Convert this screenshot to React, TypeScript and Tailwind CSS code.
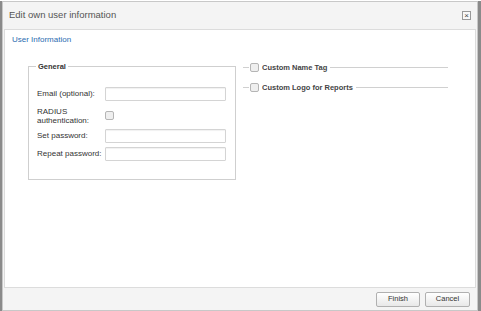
export default function App() {
  const inputCls = "w-[121px] h-[14px] border border-[#d4d4d4] bg-white rounded-[1px] shadow-[inset_0_1px_1px_rgba(0,0,0,0.06)]";
  const boxCls = "w-[9px] h-[9px] border border-[#b5b5b5] bg-[#efefef] rounded-[2px]";

  return (
    <div className="w-[481px] h-[311px] bg-[#8a8a8a] font-['Liberation_Sans',Arial,sans-serif] text-[#333]">
      <div className="ml-[2px] mr-[3px] mt-[1px] h-[310px] bg-[#f4f4f4] border border-[#c8c8c8] flex flex-col">
        {/* title bar */}
        <div className="h-[27px] flex items-center justify-between pl-[6px] pr-[6px]">
          <span className="text-[9.5px] text-[#555]">Edit own user information</span>
          <span className="w-[9px] h-[9px] border border-[#999] bg-[#f8f8f8] flex items-center justify-center text-[8px] leading-none text-[#444]">
            ×
          </span>
        </div>

        {/* content */}
        <div className="mx-[1px] flex-1 bg-white border border-[#dcdcdc] pt-[5px] px-[7px]">
          <div className="text-[8px] text-[#2b6cb0] leading-[10px]">User Information</div>

          <div className="flex mt-[17px] ml-[16px] gap-[7px]">
            {/* General fieldset */}
            <fieldset className="w-[208px] h-[118px] border border-[#cfcfcf] px-[8px] pb-0 m-0">
              <legend className="text-[7.5px] leading-[9px] font-bold text-[#333] px-[2px] ml-[-1px]">General</legend>
              <div className="mt-[16px] flex flex-col gap-[4px] text-[8px] text-[#333] whitespace-nowrap">
                <div className="flex items-center">
                  <span className="w-[68px]">Email (optional):</span>
                  <div className={inputCls} />
                </div>
                <div className="flex items-center mt-[2px]">
                  <span className="w-[68px] leading-[9px]">RADIUS<br />authentication:</span>
                  <div className={boxCls + " mb-[2px]"} />
                </div>
                <div className="flex items-center">
                  <span className="w-[68px]">Set password:</span>
                  <div className={inputCls} />
                </div>
                <div className="flex items-center">
                  <span className="w-[68px]">Repeat password:</span>
                  <div className={inputCls} />
                </div>
              </div>
            </fieldset>

            {/* collapsed fieldsets */}
            <div className="w-[205px] flex flex-col gap-[9px] pt-0">
              <div className="flex items-center h-[11px]">
                <div className="w-[6px] h-px bg-[#d0d0d0]" />
                <div className={boxCls + " ml-[1px]"} />
                <span className="ml-[3px] mr-[3px] text-[7.5px] font-bold text-[#444]">Custom Name Tag</span>
                <div className="flex-1 h-px bg-[#d0d0d0]" />
              </div>
              <div className="flex items-center h-[11px]">
                <div className="w-[6px] h-px bg-[#d0d0d0]" />
                <div className={boxCls + " ml-[1px]"} />
                <span className="ml-[3px] mr-[3px] text-[7.5px] font-bold text-[#444]">Custom Logo for Reports</span>
                <div className="flex-1 h-px bg-[#d0d0d0]" />
              </div>
            </div>
          </div>
        </div>

        {/* footer */}
        <div className="h-[22px] flex items-center justify-end gap-[5px] pr-[7px]">
          <button className="w-[44px] h-[15px] border border-[#b0b0b0] rounded-[2px] bg-gradient-to-b from-white to-[#e8e8e8] text-[7.5px] text-[#333]">Finish</button>
          <button className="w-[45px] h-[15px] border border-[#b0b0b0] rounded-[2px] bg-gradient-to-b from-white to-[#e8e8e8] text-[7.5px] text-[#333]">Cancel</button>
        </div>
      </div>
    </div>
  );
}
